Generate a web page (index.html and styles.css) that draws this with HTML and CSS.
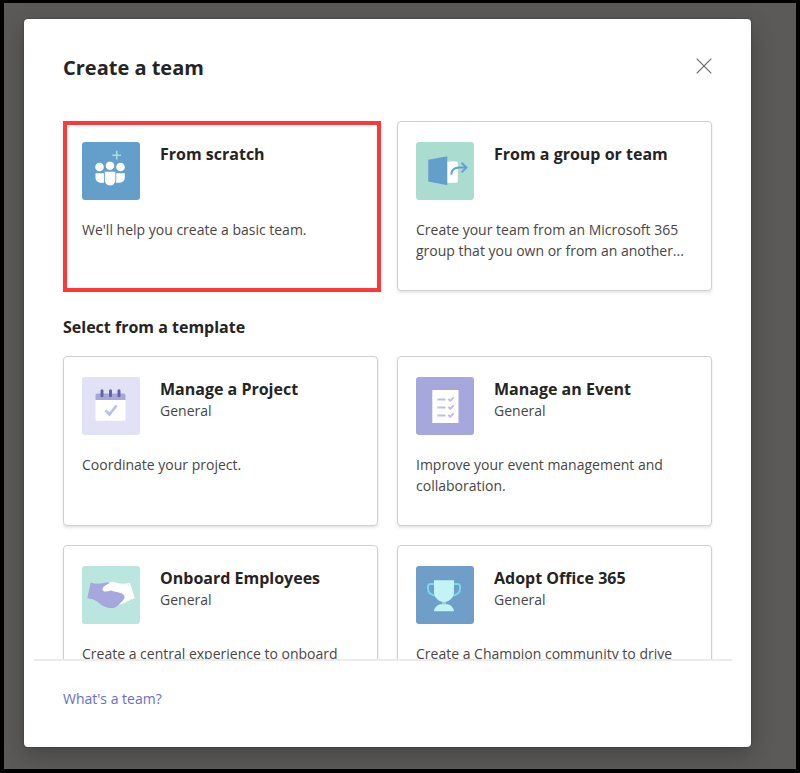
FILE: index.html
```html
<!DOCTYPE html>
<html lang="en">
<head>
<meta charset="utf-8">
<meta name="viewport" content="width=device-width, initial-scale=1">
<title>Create a team</title>
<link rel="stylesheet" href="styles.css">
</head>
<body>
<main class="backdrop">
  <section class="dialog" role="dialog" aria-labelledby="dialog-title">
    <header class="dialog-header">
      <h1 class="dialog-title" id="dialog-title">Create a team</h1>
      <button class="close" type="button" aria-label="Close">
        <svg width="16" height="16" viewBox="0 0 16 16" fill="none" stroke="#6b6a69" stroke-width="1.2"><path d="M.7.7l14.6 14.6M15.3.7L.7 15.3"/></svg>
      </button>
    </header>

    <div class="dialog-body">
      <div class="cards">
        <button class="card card-selected" type="button">
          <span class="card-head">
            <svg class="card-icon" viewBox="0 0 58 58">
              <rect width="58" height="58" rx="3" fill="#649fcb"/>
              <path d="M34.7 8.8v8.8M30.3 13.2h8.8" stroke="#a9dfd2" stroke-width="1.6"/>
              <g fill="#fff">
                <circle cx="17.5" cy="25" r="4.3"/><circle cx="38.5" cy="25" r="4.3"/>
                <path d="M13.5 31.3H22v9.5h-3.5a5 5 0 0 1-5-5zM34 31.3h8.8v4.5a5 5 0 0 1-5 5H34z"/>
              </g>
              <g fill="#fff" stroke="#649fcb" stroke-width=".8">
                <circle cx="28" cy="23.8" r="4.6"/>
                <path d="M22.4 29.3h11.4v8.9a5.7 5.7 0 0 1-11.4 0z"/>
              </g>
            </svg>
            <span class="card-heading"><span class="card-title">From scratch</span></span>
          </span>
          <span class="card-text">We'll help you create a basic team.</span>
        </button>
        <button class="card" type="button">
          <span class="card-head">
            <svg class="card-icon" viewBox="0 0 58 58">
              <rect width="58" height="58" rx="3" fill="#aaddd0"/>
              <path d="M30 19.5h10.3a1.5 1.5 0 0 1 1.5 1.5v18.2a1.5 1.5 0 0 1-1.5 1.5H30z" fill="#fff"/>
              <path d="M12.2 17.8L31.3 14.3v29L12.2 39.5z" fill="#649fcb"/>
              <path d="M35.2 32.6c.4-4.7 3.5-7 8-7h6.700M45.5 20.8l4.9 4.8-4.9 4.8" fill="none" stroke="#649fcb" stroke-width="2"/>
            </svg>
            <span class="card-heading"><span class="card-title">From a group or team</span></span>
          </span>
          <span class="card-text">Create your team from an Microsoft 365 group that you own or from an another...</span>
        </button>
      </div>

      <h2 class="section-title">Select from a template</h2>

      <div class="cards">
        <button class="card" type="button">
          <span class="card-head">
            <svg class="card-icon" viewBox="0 0 58 58">
              <rect width="58" height="58" rx="3" fill="#e2e2f6"/>
              <path d="M13.5 23h30v19.7a1 1 0 0 1-1 1h-28a1 1 0 0 1-1-1z" fill="#fff"/>
              <path d="M13.5 23v-5a1.5 1.5 0 0 1 1.5-1.5h27a1.5 1.5 0 0 1 1.5 1.5v5z" fill="#a6a7dc"/>
              <path d="M20 13.8v5M28.5 13.8v5M37 13.8v5" stroke="#6264a7" stroke-width="3" stroke-linecap="round"/>
              <path d="M23.5 33.3l4 4.2 7-9" fill="none" stroke="#bcbcec" stroke-width="2.6"/>
            </svg>
            <span class="card-heading"><span class="card-title">Manage a Project</span><span class="card-kind">General</span></span>
          </span>
          <span class="card-text">Coordinate your project.</span>
        </button>
        <button class="card" type="button">
          <span class="card-head">
            <svg class="card-icon" viewBox="0 0 58 58">
              <rect width="58" height="58" rx="3" fill="#a6a7dc"/>
              <rect x="16.3" y="13" width="26.2" height="33" fill="#fff"/>
              <path d="M21.5 22.5h8M21.5 30.5h8M21.5 38.5h8M32.3 21.8l2 2 3.5-3.6M32.3 29.8l2 2 3.5-3.6M32.3 37.8l2 2 3.5-3.6" fill="none" stroke="#bdbdec" stroke-width="1.9"/>
            </svg>
            <span class="card-heading"><span class="card-title">Manage an Event</span><span class="card-kind">General</span></span>
          </span>
          <span class="card-text">Improve your event management and collaboration.</span>
        </button>
        <button class="card" type="button">
          <span class="card-head">
            <svg class="card-icon" viewBox="0 0 58 58">
              <rect width="58" height="58" rx="3" fill="#bbe6e0"/>
              <path d="M25.5 17.8c3-2.2 6-1.9 9-1.1 4 1.2 8.7 1.4 13.5 0L52.8 32.2C46 34 42.5 38.3 35.5 38.8L20 24.5c-.5-3 3-5.5 5.500-6.700z" fill="#fff"/>
              <path d="M8.700 16.500c5.500 2.100 10.800 1.200 16.700-.2l2.100 1c-3.500 1-7.500 4.500-7 6.500.7 2.700 5 1.700 8.800.8 3.500 1.700 8 1.400 11 3.200 3.500 2.400 2.300 5 .5 6.800-2.800 2.800-5.300 6.200-8.300 7.100-4 1.200-8.300-.4-12.500-2.300C16 36.500 13.500 33 5.300 32.300z" fill="#a6a7dc"/>
            </svg>
            <span class="card-heading"><span class="card-title">Onboard Employees</span><span class="card-kind">General</span></span>
          </span>
          <span class="card-text">Create a central experience to onboard</span>
        </button>
        <button class="card" type="button">
          <span class="card-head">
            <svg class="card-icon" viewBox="0 0 58 58">
              <rect width="58" height="58" rx="3" fill="#6f9fc9"/>
              <path d="M19 18h-4c-2.500 0-3.300 1.500-3.200 4 .2 4.500 3 7.500 8.700 7.500M37 18h4c2.500 0 3.300 1.500 3.200 4-.2 4.500-3 7.500-8.700 7.500" fill="none" stroke="#79dcee" stroke-width="1.900"/>
              <path d="M25.800 34h4.400v6h-4.400z" fill="#8ed0dc"/>
              <path d="M18 14.300h20v11.900c0 5-4.500 9.800-10 9.800s-10-4.800-10-9.800zM18 45.200c.3-4 3.500-6.500 6.500-7h7c3 .5 6.200 3 6.500 7z" fill="#c3f3f4"/>
            </svg>
            <span class="card-heading"><span class="card-title">Adopt Office 365</span><span class="card-kind">General</span></span>
          </span>
          <span class="card-text">Create a Champion community to drive</span>
        </button>
      </div>
    </div>

    <footer class="dialog-footer"><a class="link" href="#">What's a team?</a></footer>
  </section>
</main>
</body>
</html>
```
FILE: styles.css
```css
* { box-sizing: border-box; }

body {
  margin: 0;
  font-family: "Open Sans", "Noto Sans", sans-serif;
  font-size: 14px;
  line-height: 21px;
  color: #484644;
}

.backdrop {
  height: 100vh;
  padding: 16px 45px 22px 20px;
  border: 4px solid #000;
  border-top-width: 3px;
  background: #5b5a58;
}

.dialog {
  display: flex;
  flex-direction: column;
  height: 100%;
  background: #fff;
  border-radius: 4px;
  box-shadow: 0 8px 24px rgba(0, 0, 0, .25), 0 0 2px rgba(0, 0, 0, .4);
}

.dialog-header {
  display: flex;
  justify-content: space-between;
  align-items: flex-start;
  padding: 35px 39px 0;
}

.dialog-title {
  margin: 0;
  font-size: 20px;
  line-height: 28px;
  font-weight: 700;
  color: #252423;
}

.close {
  display: flex;
  padding: 4px 0;
  border: 0;
  background: none;
}

.dialog-body {
  flex: 1;
  min-height: 0;
  overflow-y: auto;
  scrollbar-width: none;
  margin: 0 19px 0 10px;
  padding: 39px 20px 0 29px;
  border-bottom: 2px solid #edebe9;
}

.cards {
  display: grid;
  grid-template-columns: 1fr 1fr;
  grid-auto-rows: 170px;
  gap: 19px;
}

.card {
  position: relative;
  display: flex;
  flex-direction: column;
  gap: 19px;
  padding: 20px 18px;
  border: 1px solid #d2d0ce;
  border-radius: 4px;
  background: #fff;
  box-shadow: 0 2px 3px rgba(0, 0, 0, .1);
  font: inherit;
  color: inherit;
  text-align: left;
}

.card-selected {
  border-color: transparent;
  box-shadow: none;
}

/* Highlight frame drawn over the selected card */
.card-selected::after {
  content: "";
  position: absolute;
  inset: -1px -4px -2px -1px;
  border: 4px solid #ff3738;
}

.card-head {
  display: flex;
  gap: 20px;
}

.card-icon {
  flex: none;
  width: 58px;
  height: 58px;
}

.card-heading {
  display: flex;
  flex-direction: column;
  padding-top: 1px;
}

.card-title,
.section-title {
  font-size: 16px;
  line-height: 22px;
  font-weight: 700;
  color: #252423;
}

.section-title {
  margin: 25px 0 18px;
}

.link {
  color: #6a6bcf;
  text-decoration: none;
}

.dialog-footer {
  padding: 27px 39px 38px;
}
```
